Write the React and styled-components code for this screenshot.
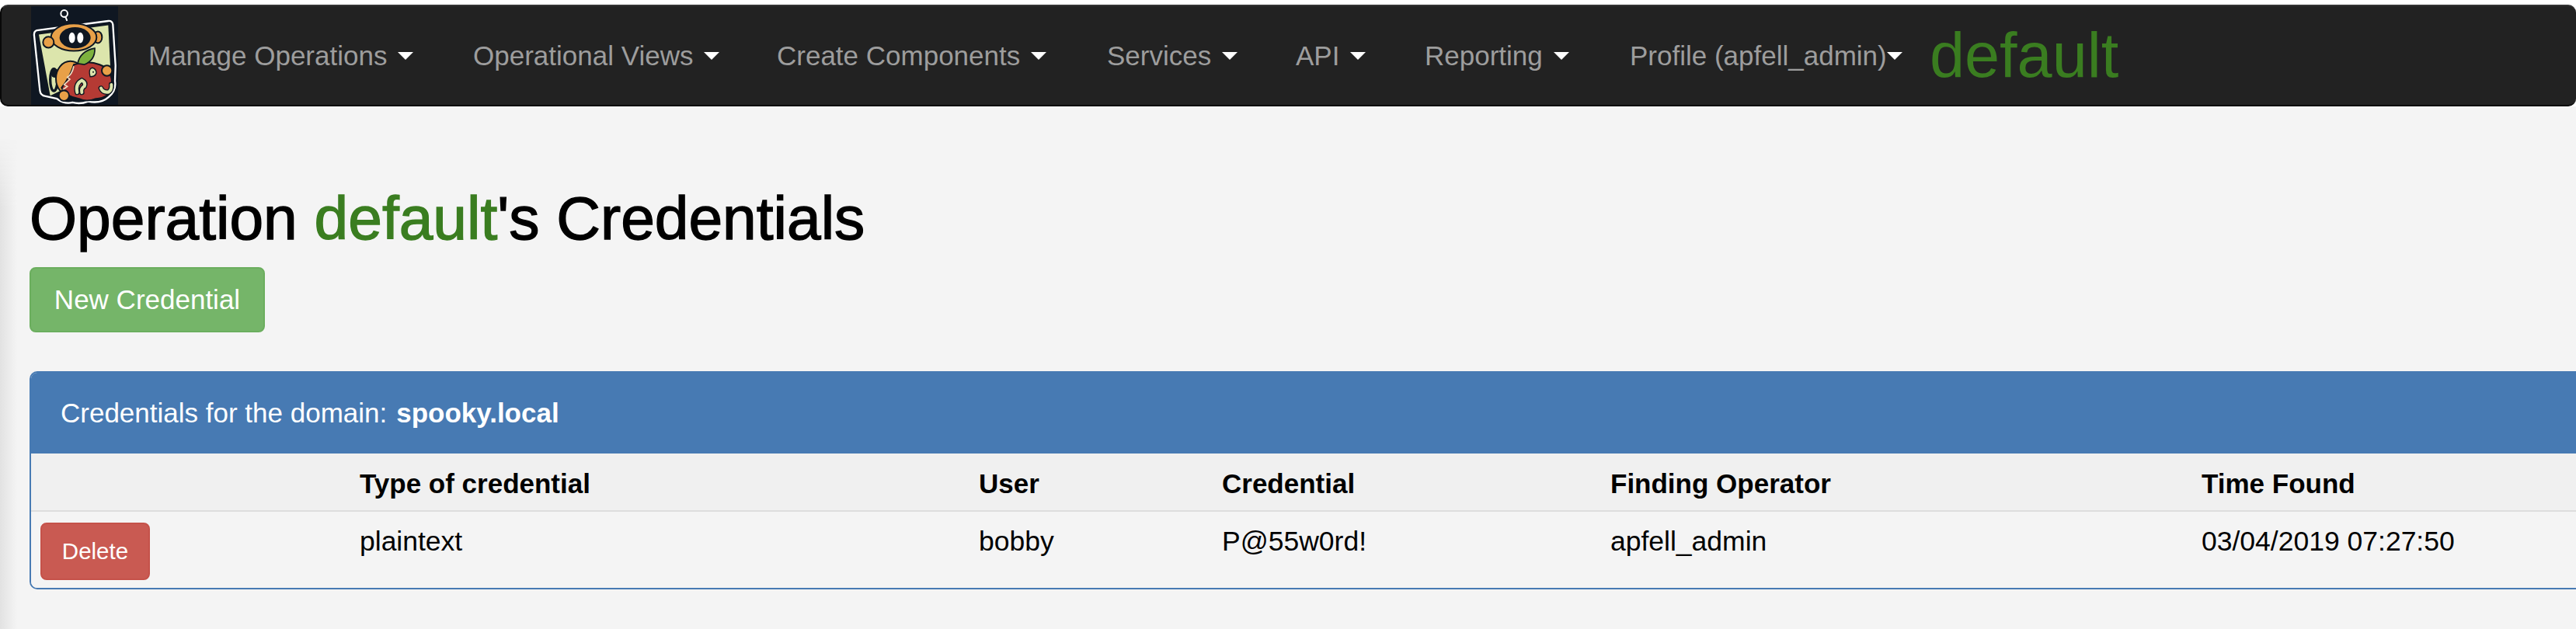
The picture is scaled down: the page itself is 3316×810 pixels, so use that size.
import styled, { createGlobalStyle } from 'styled-components';

const GlobalStyle = createGlobalStyle`
  html, body {
    margin: 0;
    padding: 0;
    width: 3316px;
    height: 810px;
    overflow: hidden;
    background: #fff;
    font-family: 'Liberation Sans', Arial, sans-serif;
  }
`;

const Navbar = styled.nav`
  display: flex;
  align-items: stretch;
  height: 131px;
  margin-top: 6px;
  padding-left: 38px;
  box-sizing: border-box;
  background: #222;
  border-radius: 10px;
  border: 2px solid #080808;
  border-top-color: #333;
  border-right: none;
  overflow: hidden;
`;

const NavMenu = styled.ul`
  display: flex;
  align-items: center;
  list-style: none;
  margin: 0;
  padding: 0;
`;

const NavItem = styled.li`
  display: flex;
  align-items: center;
  width: ${(p) => p.$width}px;
  font-size: 35px;
  color: #9d9d9d;
  white-space: nowrap;
`;

const Caret = styled.span`
  display: inline-block;
  margin-left: ${(p) => p.$gap ?? 14}px;
  border-top: 10px solid #fff;
  border-left: 10px solid transparent;
  border-right: 10px solid transparent;
`;

const NavLogo = styled.svg`
  display: block;
  flex: none;
  width: 112px;
  height: 127px;
  margin-right: 39px;
`;

const OperationName = styled.span`
  font-size: 81px;
  line-height: 1;
  color: #3a7d20;
  margin-left: 0;
`;

const Page = styled.main`
  position: relative;
  height: 673px;
  padding: 0 0 0 38px;
  background: #f4f4f4;
  &::before {
    content: '';
    position: absolute;
    left: 0;
    top: 40px;
    bottom: 0;
    width: 22px;
    background: linear-gradient(to right, #e2e2e2, #f4f4f4);
    -webkit-mask-image: linear-gradient(to bottom, transparent, #000 90px);
  }
`;

const Title = styled.h1`
  position: relative;
  margin: 0;
  padding-top: 102px;
  font-size: 78.5px;
  font-weight: 400;
  line-height: 84px;
  color: #000;
  white-space: nowrap;
  -webkit-text-stroke: 1.4px #000;
`;

const Green = styled.span`
  color: #3a7d20;
  -webkit-text-stroke: 1.4px #3a7d20;
`;

const Button = styled.button`
  display: block;
  position: relative;
  box-sizing: border-box;
  padding: 0;
  border-radius: 8px;
  font-family: inherit;
  color: #fff;
  cursor: pointer;
`;

const NewButton = styled(Button)`
  width: 303px;
  height: 84px;
  margin-top: 21px;
  font-size: 35px;
  background: #75b569;
  border: 2px solid #6bae5e;
`;

const DeleteButton = styled(Button)`
  width: 141px;
  height: 74px;
  font-size: 29.5px;
  background: #c95a52;
  border: 2px solid #c5524a;
`;

const Panel = styled.section`
  position: relative;
  width: 3400px;
  margin-top: 50px;
  box-sizing: border-box;
  border: 2px solid #477ab3;
  border-radius: 10px;
  overflow: hidden;
`;

const PanelHeading = styled.div`
  height: 104px;
  display: flex;
  align-items: center;
  padding-left: 38px;
  background: #477ab3;
  font-size: 35px;
  color: #fff;
  b {
    margin-left: 12px;
  }
`;

const Table = styled.table`
  width: 100%;
  table-layout: fixed;
  border-collapse: collapse;
  font-size: 35.5px;
  color: #000;
`;

const HeadCell = styled.th`
  height: 74px;
  padding: 4px 12px 0;
  box-sizing: border-box;
  text-align: left;
  font-size: 35px;
  font-weight: 700;
  background: #f0f0f0;
  border-bottom: 2px solid #ddd;
`;

const Cell = styled.td`
  height: 99px;
  padding: 18px 12px 0;
  box-sizing: border-box;
  vertical-align: top;
  background: #f4f4f4;
`;

const ButtonCell = styled(Cell)`
  padding-top: 14px;
`;

const columns = [411, 797, 313, 500, 761, 618];
const heads = ['', 'Type of credential', 'User', 'Credential', 'Finding Operator', 'Time Found'];
const row = ['plaintext', 'bobby', 'P@55w0rd!', 'apfell_admin', '03/04/2019 07:27:50'];

const menu = [
  { label: 'Manage Operations', width: 418 },
  { label: 'Operational Views', width: 391 },
  { label: 'Create Components', width: 425 },
  { label: 'Services', width: 243 },
  { label: 'API', width: 166 },
  { label: 'Reporting', width: 264 },
  { label: 'Profile (apfell_admin)', width: 386, gap: 0 },
];

// logo drawn in the crop's own coordinates
const Logo = () => (
  <NavLogo viewBox="0 0 336 375" preserveAspectRatio="none">
    <rect width="336" height="375" fill="#0f1722" />
    <circle cx="128" cy="28" r="13" fill="none" stroke="#fff" strokeWidth="6" />
    <path d="M133 40l6 16" stroke="#fff" strokeWidth="6" />
    <path
      d="M22 92Q10 96 12 112L34 320Q36 340 56 342L100 352Q130 374 160 366Q190 374 220 362Q270 372 300 345Q330 320 324 285L326 225L316 70Q314 54 298 56Z"
      fill="#0f1722"
      stroke="#fff"
      strokeWidth="7"
    />
    <path d="M30 108L298 72L306 230L74 340Z" fill="#dce5ac" />
    <ellipse cx="258" cy="118" rx="16" ry="22" fill="#e8a048" stroke="#0f1722" strokeWidth="6" />
    <ellipse cx="165" cy="118" rx="88" ry="52" fill="#e8a048" stroke="#0f1722" strokeWidth="6" />
    <ellipse cx="170" cy="120" rx="60" ry="40" fill="#0f1722" />
    <ellipse cx="158" cy="120" rx="12" ry="20" fill="#fff" />
    <ellipse cx="190" cy="120" rx="12" ry="20" fill="#fff" />
    <circle cx="67" cy="137" r="21" fill="#e8a048" stroke="#0f1722" strokeWidth="6" />
    <ellipse cx="88" cy="280" rx="14" ry="42" fill="#dce5ac" stroke="#0f1722" strokeWidth="10" />
    <circle cx="93" cy="255" r="17" fill="#0f1722" />
    <ellipse cx="152" cy="275" rx="56" ry="66" fill="#e8a048" stroke="#0f1722" strokeWidth="6" />
    <path
      d="M165 222Q220 205 265 222Q315 240 312 300Q305 350 250 352Q215 366 185 352Q135 345 118 310Q150 270 165 222Z"
      fill="#b53a34"
      stroke="#0f1722"
      strokeWidth="6"
    />
    <path d="M165 228Q158 260 140 270L150 278L128 298L140 305L122 318" fill="none" stroke="#f0dcc0" strokeWidth="5" />
    <path d="M180 218Q190 170 246 160Q248 205 205 222Z" fill="#7db13e" stroke="#0f1722" strokeWidth="5" />
    <path d="M228 268Q220 238 236 234Q252 238 252 254Q248 268 228 268Z" fill="#dce5ac" stroke="#0f1722" strokeWidth="4" />
    <circle cx="240" cy="250" r="3" fill="#0f1722" />
    <path d="M178 328Q170 295 196 282Q212 290 206 304Q192 312 196 328" fill="none" stroke="#0f1722" strokeWidth="20" strokeLinecap="round" />
    <path d="M178 328Q170 295 196 282Q212 290 206 304Q192 312 196 328" fill="none" stroke="#dce5ac" strokeWidth="12" strokeLinecap="round" />
    <path d="M270 312Q278 330 300 326Q312 318 310 298" fill="none" stroke="#0f1722" strokeWidth="20" strokeLinecap="round" />
    <path d="M270 312Q278 330 300 326Q312 318 310 298" fill="none" stroke="#dce5ac" strokeWidth="12" strokeLinecap="round" />
    <circle cx="293" cy="245" r="20" fill="#e8a048" stroke="#0f1722" strokeWidth="6" />
    <circle cx="127" cy="340" r="20" fill="#e8a048" stroke="#0f1722" strokeWidth="6" />
  </NavLogo>
);

const App = () => {
  return (
    <>
      <GlobalStyle />
      <Navbar>
        <Logo />
        <NavMenu>
          {menu.map((item) => (
            <NavItem key={item.label} $width={item.width}>
              {item.label}
              <Caret $gap={item.gap} />
            </NavItem>
          ))}
          <OperationName>default</OperationName>
        </NavMenu>
      </Navbar>
      <Page>
        <Title>
          Operation <Green>default</Green>'s Credentials
        </Title>
        <NewButton>New Credential</NewButton>
        <Panel>
          <PanelHeading>
            Credentials for the domain: <b>spooky.local</b>
          </PanelHeading>
          <Table>
            <colgroup>
              {columns.map((w, i) => (
                <col key={i} style={{ width: w }} />
              ))}
            </colgroup>
            <thead>
              <tr>
                {heads.map((h) => (
                  <HeadCell key={h}>{h}</HeadCell>
                ))}
              </tr>
            </thead>
            <tbody>
              <tr>
                <ButtonCell>
                  <DeleteButton>Delete</DeleteButton>
                </ButtonCell>
                {row.map((v) => (
                  <Cell key={v}>{v}</Cell>
                ))}
              </tr>
            </tbody>
          </Table>
        </Panel>
      </Page>
    </>
  );
};

export default App;
